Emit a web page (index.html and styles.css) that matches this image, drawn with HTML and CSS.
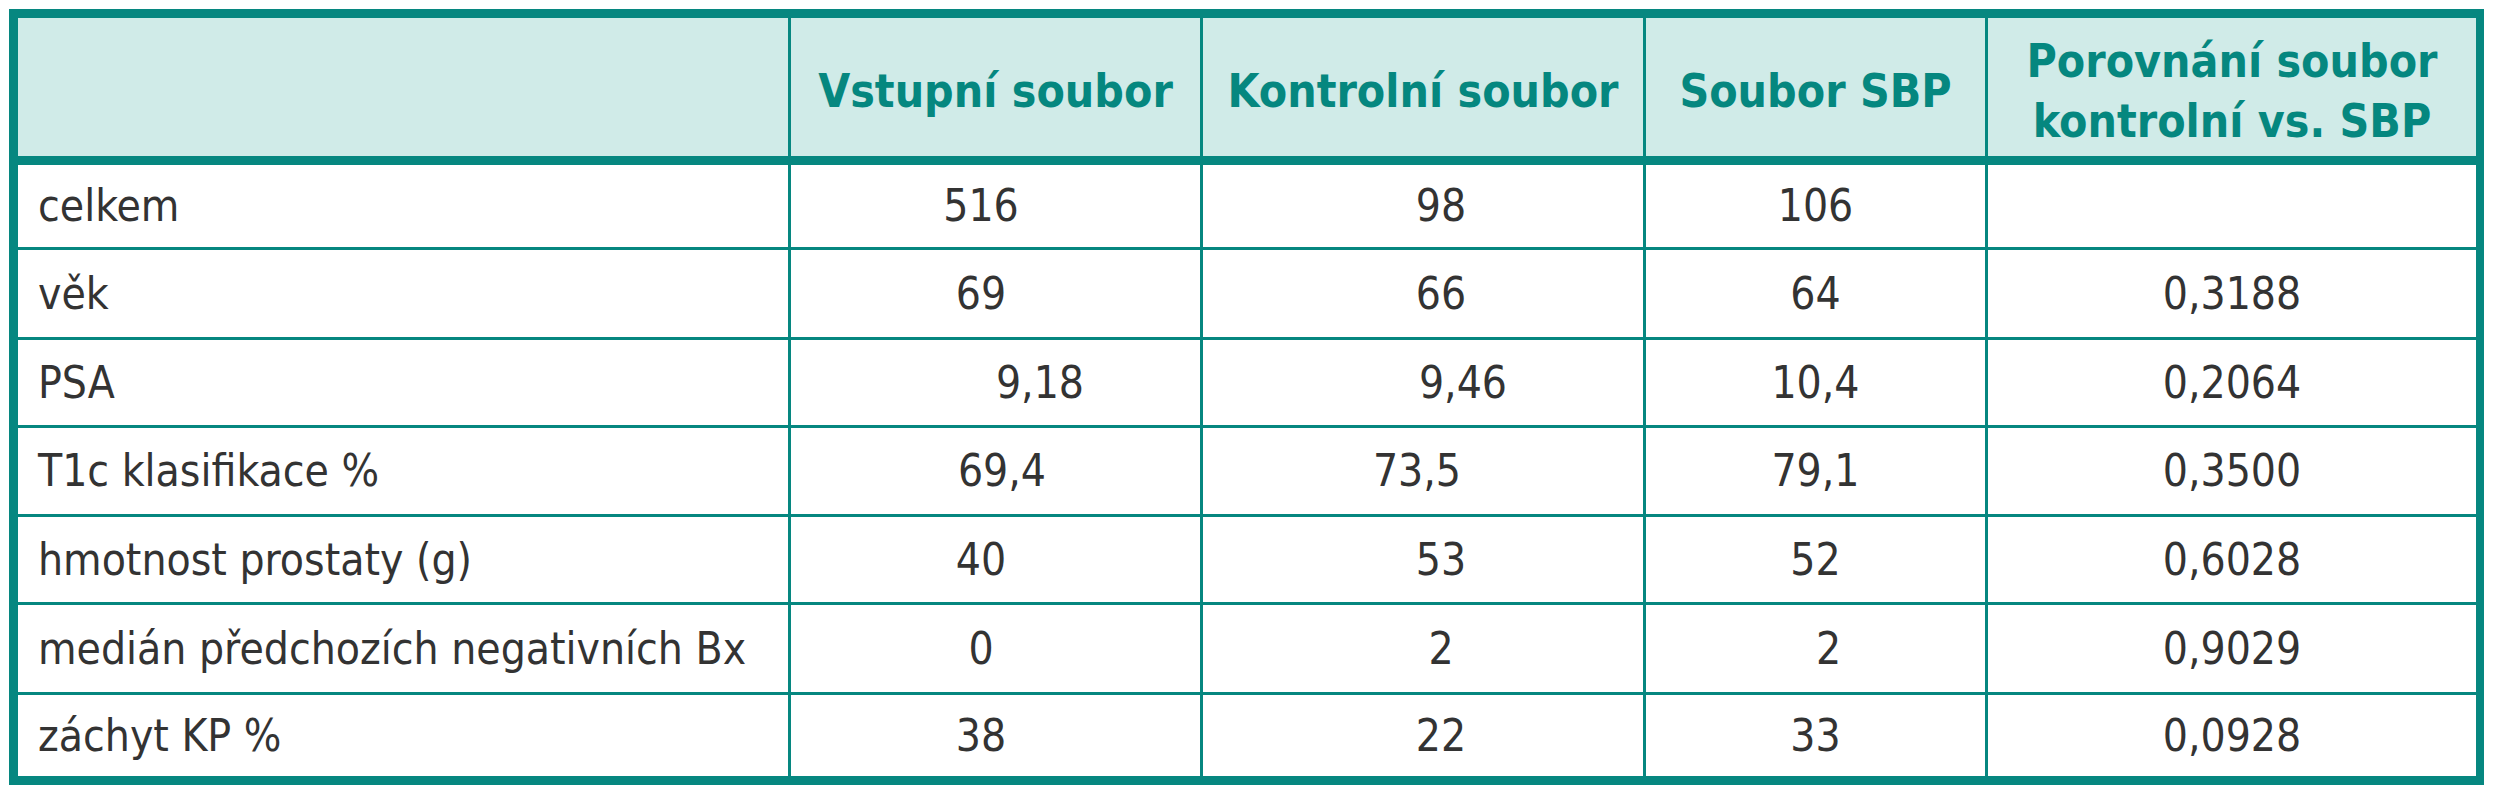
FILE: index.html
```html
<!DOCTYPE html>
<html lang="cs">
<head>
<meta charset="utf-8">
<title>Tabulka</title>
<link rel="stylesheet" href="styles.css">
</head>
<body>
<div class="table">
  <div class="cell head"></div>
  <div class="cell head">Vstupní soubor</div>
  <div class="cell head">Kontrolní soubor</div>
  <div class="cell head">Soubor SBP</div>
  <div class="cell head">Porovnání soubor<br>kontrolní vs. SBP</div>

  <div class="cell label">celkem</div>
  <div class="cell c2">516</div>
  <div class="cell c3">98</div>
  <div class="cell c4">106</div>
  <div class="cell c5"></div>

  <div class="cell label">věk</div>
  <div class="cell c2">69</div>
  <div class="cell c3">66</div>
  <div class="cell c4">64</div>
  <div class="cell c5">0,3188</div>

  <div class="cell label">PSA</div>
  <div class="cell c2 shift-far">9,18</div>
  <div class="cell c3 shift-far">9,46</div>
  <div class="cell c4">10,4</div>
  <div class="cell c5">0,2064</div>

  <div class="cell label">T1c klasifikace %</div>
  <div class="cell c2 shift-near">69,4</div>
  <div class="cell c3 shift-back">73,5</div>
  <div class="cell c4">79,1</div>
  <div class="cell c5">0,3500</div>

  <div class="cell label">hmotnost prostaty (g)</div>
  <div class="cell c2">40</div>
  <div class="cell c3">53</div>
  <div class="cell c4">52</div>
  <div class="cell c5">0,6028</div>

  <div class="cell label">medián předchozích negativních Bx</div>
  <div class="cell c2">0</div>
  <div class="cell c3">2</div>
  <div class="cell c4 shift-near">2</div>
  <div class="cell c5">0,9029</div>

  <div class="cell label">záchyt KP %</div>
  <div class="cell c2">38</div>
  <div class="cell c3">22</div>
  <div class="cell c4">33</div>
  <div class="cell c5">0,0928</div>
</div>
</body>
</html>
```
FILE: styles.css
```css
html, body {
  margin: 0;
  padding: 0;
  background: #ffffff;
}

.table {
  margin: 9px 0 0 9px;
  width: 2458px;
  display: grid;
  grid-template-columns: 770px 409px 440px 339px 488px;
  grid-template-rows: 144px 82px 87px 85px 86px 85px 87px 81px;
  gap: 3px;
  padding: 9px 8px 9px 9px;
  background: #068780;
  font-family: "DejaVu Sans Condensed", "Liberation Sans", sans-serif;
}

.cell {
  background: #ffffff;
  display: flex;
  align-items: center;
  justify-content: center;
  color: #333333;
  font-size: 44px;
  line-height: 1;
}

.head {
  background: #d0ebe8;
  margin-bottom: 6px;
  text-align: center;
  color: #05877f;
  font-weight: bold;
  font-size: 46px;
  line-height: 60px;
  padding-top: 8px;
}

.label {
  justify-content: flex-start;
  padding-left: 20px;
}

.c2 {
  padding-right: 29px;
}

.c2.shift-far {
  padding-right: 0;
  padding-left: 89px;
}

.c2.shift-near {
  padding-right: 0;
  padding-left: 13px;
}

.c3 {
  padding-left: 36px;
}

.c3.shift-far {
  padding-left: 80px;
}

.c3.shift-back {
  padding-left: 0;
  padding-right: 12px;
}

.c4.shift-near {
  padding-left: 26px;
}
```
